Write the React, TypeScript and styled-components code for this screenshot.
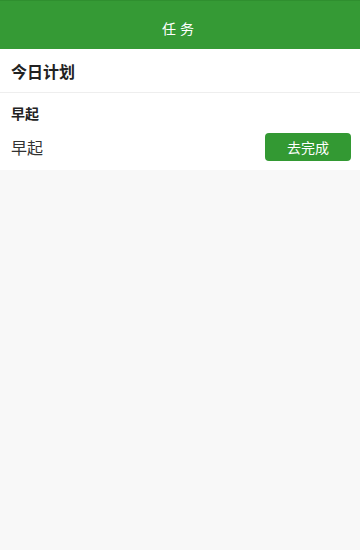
import styled, { createGlobalStyle } from "styled-components";

const GlobalStyle = createGlobalStyle`
  html, body {
    margin: 0;
    padding: 0;
    background: #f8f8f8;
    font-family: "Noto Sans CJK SC", "Noto Sans", sans-serif;
  }
`;

const Page = styled.div`
  width: 360px;
  min-height: 550px;
  background: #f8f8f8;
`;

const Header = styled.header`
  height: 49px;
  background: #359a35;
  border-top: 1px solid #2f8f2f;
  box-sizing: border-box;
  display: flex;
  align-items: center;
  justify-content: center;
  color: #ffffff;
  font-size: 14px;
  letter-spacing: 4px;
  padding-top: 6px;
`;

const Section = styled.section`
  background: #ffffff;
`;

const SectionTitle = styled.div`
  height: 43px;
  display: flex;
  align-items: center;
  padding: 0 11px;
  font-size: 16px;
  font-weight: 700;
  color: #222;
  border-bottom: 1px solid #eeeeee;
`;

const Task = styled.div`
  padding: 10px 9px 9px 11px;
`;

const TaskName = styled.div`
  font-size: 14px;
  font-weight: 700;
  color: #222;
  line-height: 20px;
`;

const TaskRow = styled.div`
  display: flex;
  align-items: center;
  justify-content: space-between;
  margin-top: 10px;
`;

const TaskText = styled.span`
  font-size: 16px;
  color: #333;
`;

const DoneButton = styled.button`
  width: 86px;
  height: 28px;
  border: none;
  border-radius: 4px;
  background: #339933;
  color: #fff;
  font-family: inherit;
  font-size: 14px;
  padding: 0;
`;

export default function App() {
  return (
    <Page>
      <GlobalStyle />
      <Header>任务</Header>
      <Section>
        <SectionTitle>今日计划</SectionTitle>
        <Task>
          <TaskName>早起</TaskName>
          <TaskRow>
            <TaskText>早起</TaskText>
            <DoneButton>去完成</DoneButton>
          </TaskRow>
        </Task>
      </Section>
    </Page>
  );
}
